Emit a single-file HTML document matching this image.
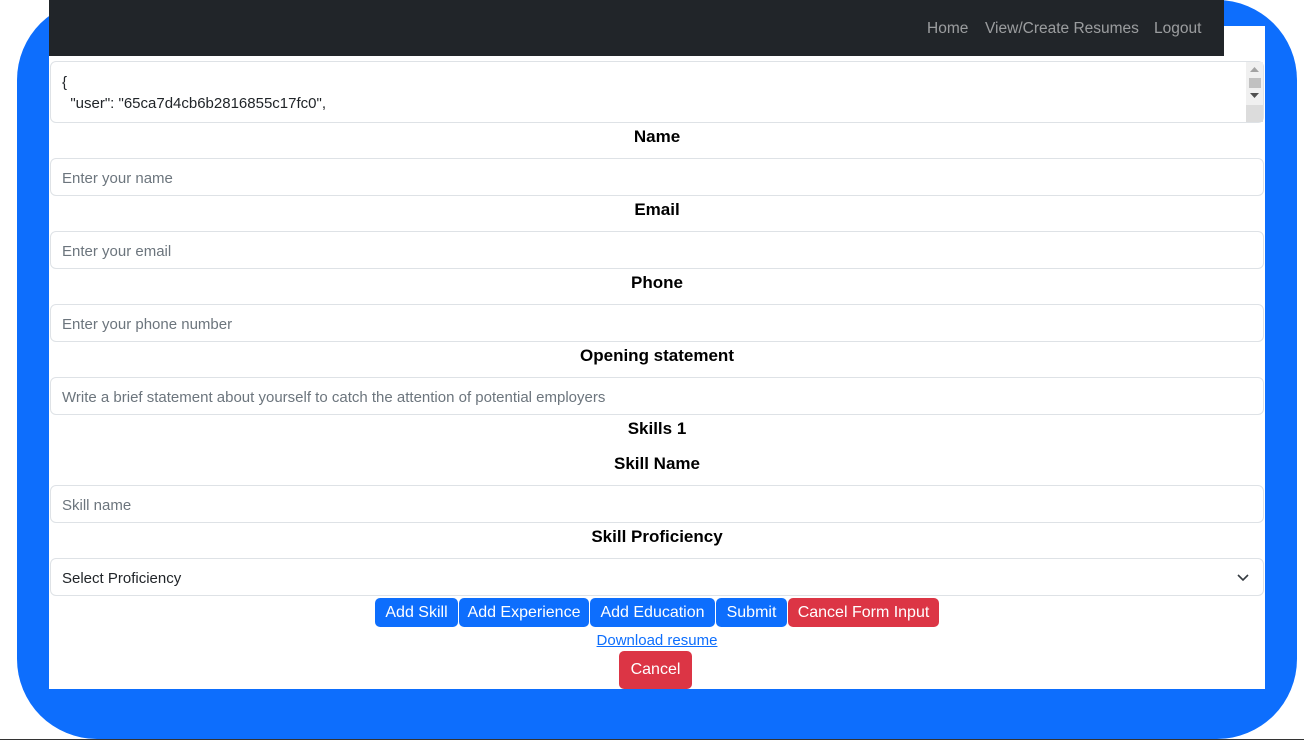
<!DOCTYPE html>
<html><head><meta charset="utf-8"><style>
*{box-sizing:border-box;margin:0;padding:0}
body{width:1304px;height:740px;background:#fff;position:relative;overflow:hidden;font-family:"Liberation Sans",sans-serif;color:#212529}
.blue{position:absolute;left:17px;top:0;width:1280px;height:739px;background:#0d6efd;border-radius:80px}
.line{position:absolute;left:0;top:739px;width:1304px;height:1px;background:#333}
.white{position:absolute;left:49px;top:26px;width:1216px;height:663px;background:#fff}
.nav{position:absolute;left:49px;top:0;width:1175px;height:56px;background:#212529;color:rgba(255,255,255,.55);font-size:15.5px}
.nav span{position:absolute;top:20px}
.inp{position:absolute;left:50px;width:1214px;height:38px;border:1px solid #dee2e6;border-radius:6px;font-size:15px;color:#6c757d;padding:11px 11px 7px;line-height:18px}
.lbl{position:absolute;left:49px;width:1216px;text-align:center;font-weight:bold;font-size:17px;color:#000}
.ta{position:absolute;left:50px;top:61px;width:1214px;height:62px;border:1px solid #dee2e6;border-radius:6px;font-size:15px;color:#212529;padding:10px 11px;line-height:21px}
.sb{position:absolute;right:0;top:0;width:17px;height:60px;background:#f0f0f0}
.btn{position:absolute;top:598px;height:29px;border-radius:5px;color:#fff;font-size:16px;text-align:center;line-height:29px;background:#0d6efd}
.red{background:#dc3545}
</style></head><body>
<div class="blue"></div><div class="line"></div>
<div class="white"></div>
<div class="nav"><span style="left:878px">Home</span><span style="left:936px">View/Create Resumes</span><span style="left:1105px">Logout</span></div>
<div class="ta">{<br>&nbsp;&nbsp;"user": "65ca7d4cb6b2816855c17fc0",
<div class="sb"><svg style="position:absolute;left:4px;top:5px" width="9" height="6"><path d="M0 5L4.5 0 9 5z" fill="#a3a3a3"/></svg><div style="position:absolute;left:3px;top:16px;width:12px;height:10px;background:#c1c1c1"></div><svg style="position:absolute;left:4px;top:31px" width="9" height="6"><path d="M0 0L4.5 5 9 0z" fill="#505050"/></svg><div style="position:absolute;left:0;top:43px;width:17px;height:17px;background:#dcdcdc"></div></div></div>
<div class="lbl" style="top:127px">Name</div>
<div class="inp" style="top:158px">Enter your name</div>
<div class="lbl" style="top:200px">Email</div>
<div class="inp" style="top:231px">Enter your email</div>
<div class="lbl" style="top:273px">Phone</div>
<div class="inp" style="top:304px">Enter your phone number</div>
<div class="lbl" style="top:346px">Opening statement</div>
<div class="inp" style="top:377px">Write a brief statement about yourself to catch the attention of potential employers</div>
<div class="lbl" style="top:419px">Skills 1</div>
<div class="lbl" style="top:454px">Skill Name</div>
<div class="inp" style="top:485px">Skill name</div>
<div class="lbl" style="top:527px">Skill Proficiency</div>
<div class="inp" style="top:558px;color:#212529">Select Proficiency<svg style="position:absolute;right:14px;top:14px" width="12" height="9" viewBox="0 0 12 9"><path d="M1 2l5 5 5-5" fill="none" stroke="#343a40" stroke-width="1.6"/></svg></div>
<div class="btn" style="left:375px;width:83px">Add Skill</div>
<div class="btn" style="left:459px;width:130px">Add Experience</div>
<div class="btn" style="left:590px;width:125px">Add Education</div>
<div class="btn" style="left:716px;width:71px">Submit</div>
<div class="btn red" style="left:788px;width:151px">Cancel Form Input</div>
<div style="position:absolute;left:0;width:1314px;top:632px;text-align:center;font-size:15px;color:#0d6efd;text-decoration:underline">Download resume</div>
<div class="btn red" style="left:619px;width:73px;top:651px;height:38px;line-height:38px">Cancel</div>
</body></html>
